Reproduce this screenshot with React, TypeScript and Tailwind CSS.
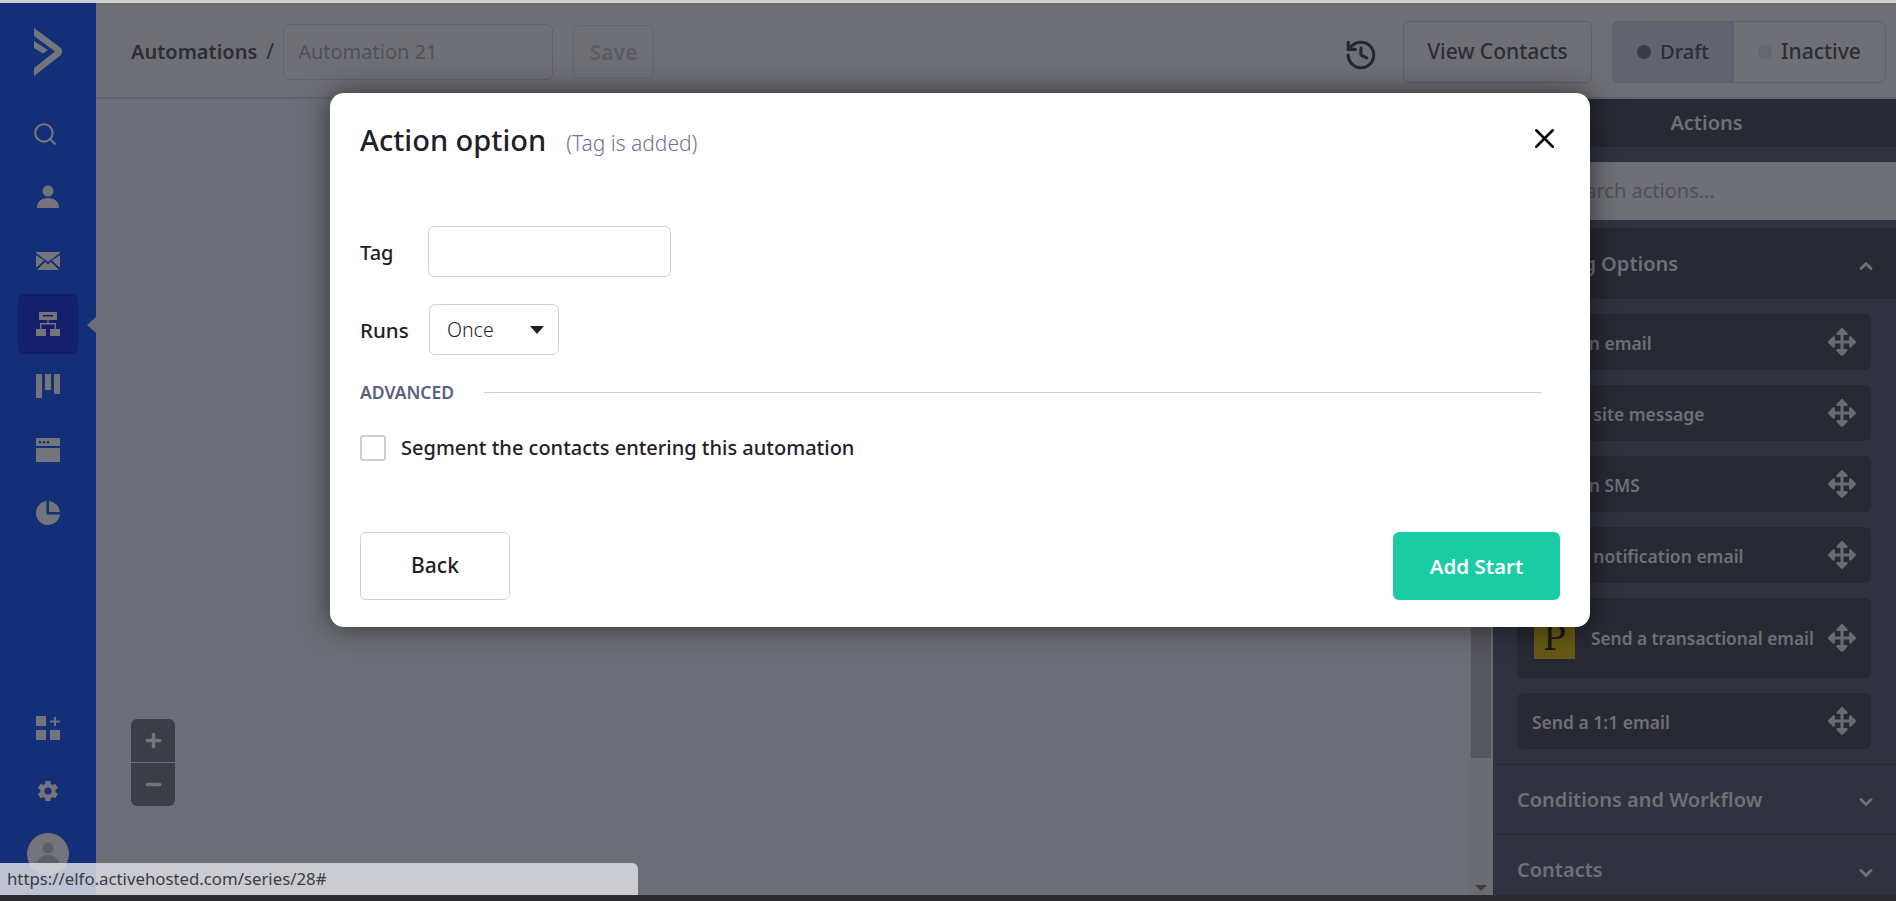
import { ChevronDown, ChevronUp, History, X, Plus, Minus, Search } from 'lucide-react';
import { FaArrowsAlt } from 'react-icons/fa';

const Logo = () => (
  <svg width="32" height="50" viewBox="0 0 32 50" fill="#74757b">
    <path d="M1 0 L28 20 Q30 23.500 28 27 L1 48 L1 40 L22 23.500 L1 8 Z" />
    <path d="M1 13 L15 22 L10 25.500 L1 20 Z" />
  </svg>
);

const UserIcon = ({ color = '#74757b' }: { color?: string }) => (
  <svg width="22" height="24" viewBox="0 0 22 24" fill={color}>
    <circle cx="11" cy="6" r="5.500" />
    <path d="M0 23 C0 16 5 13 11 13 C17 13 22 16 22 23 Z" />
  </svg>
);

const MailIcon = () => (
  <svg width="24" height="18" viewBox="0 0 24 18" fill="#74757b">
    <path d="M0 1 L12 10 L24 1 L24 0 L0 0 Z" />
    <path d="M0 3 L0 16 L8 8.500 Z" />
    <path d="M24 3 L24 16 L16 8.500 Z" />
    <path d="M1 18 L9 10 L12 12.500 L15 10 L23 18 Z" />
  </svg>
);

const AutomationIcon = () => (
  <svg width="24" height="24" viewBox="0 0 24 24" fill="#74757b">
    <path fillRule="evenodd" d="M3 0 H21 V8 H3 Z M7 3 V4.500 H17 V3 Z" />
    <path d="M11.300 8 H12.700 V11 H20 V17 H18.600 V12.400 H5.400 V17 H4 V11 H11.300 Z" />
    <rect x="0" y="17" width="10" height="7" />
    <rect x="14" y="17" width="10" height="7" />
  </svg>
);

const BoardIcon = () => (
  <svg width="24" height="24" viewBox="0 0 24 24" fill="#74757b">
    <rect x="0" y="0" width="6" height="24" />
    <rect x="9" y="0" width="6" height="16" />
    <rect x="18" y="0" width="6" height="20" />
  </svg>
);

const BrowserIcon = () => (
  <svg width="24" height="24" viewBox="0 0 24 24" fill="#74757b">
    <path fillRule="evenodd" d="M0 0 H24 V8 H0 Z M4 3 A1.300 1.300 0 1 0 4 5.600 A1.300 1.300 0 1 0 4 3 Z M8 3 A1.300 1.300 0 1 0 8 5.600 A1.300 1.300 0 1 0 8 3 Z M12 3 A1.300 1.300 0 1 0 12 5.600 A1.300 1.300 0 1 0 12 3 Z" />
    <rect x="0" y="10" width="24" height="14" />
  </svg>
);

const PieIcon = () => (
  <svg width="24" height="24" viewBox="0 0 24 24" fill="#74757b">
    <path d="M10.500 0.100 V13.500 H23.900 A12 12 0 1 1 10.500 0.100 Z" />
    <path d="M13 0.100 A12 12 0 0 1 23.900 11 H13 Z" />
  </svg>
);

const AppsIcon = () => (
  <svg width="24" height="24" viewBox="0 0 24 24" fill="#74757b">
    <rect x="0" y="0" width="10" height="10" />
    <rect x="0" y="14" width="10" height="10" />
    <rect x="14" y="14" width="10" height="10" />
    <path d="M18 1 H20 V4.500 H24 V6.500 H20 V10 H18 V6.500 H14 V4.500 H18 Z" />
  </svg>
);

const GearIcon = () => (
  <svg width="24" height="24" viewBox="0 0 24 24" fill="#74757b">
    <path d="M19.400 13c.1-.3.100-.7.100-1s0-.7-.1-1l2.100-1.600c.2-.2.200-.4.100-.6l-2-3.500c-.1-.2-.4-.3-.6-.2l-2.500 1c-.5-.4-1.100-.7-1.700-1l-.4-2.600c0-.3-.2-.4-.5-.4h-4c-.3 0-.5.100-.5.400l-.4 2.600c-.6.300-1.200.6-1.700 1l-2.500-1c-.2-.1-.5 0-.6.200l-2 3.500c-.1.200-.1.400.1.600L4.400 11c-.1.300-.1.700-.1 1s0 .7.100 1l-2.100 1.600c-.2.200-.2.400-.1.600l2 3.500c.1.200.4.300.6.200l2.500-1c.5.400 1.100.7 1.700 1l.4 2.600c0 .3.200.4.500.4h4c.3 0 .5-.1.500-.4l.4-2.600c.6-.3 1.200-.6 1.700-1l2.500 1c.2.100.5 0 .6-.2l2-3.500c.1-.2.100-.4-.1-.6L19.400 13zM12 15.500a3.500 3.500 0 1 1 0-7 3.500 3.500 0 0 1 0 7z" />
  </svg>
);

const actionItems = [
  { label: 'Send an email' },
  { label: 'Send a site message' },
  { label: 'Send an SMS' },
  { label: 'Send a notification email' },
];

const ActionRow = ({ label }: { label: string }) => (
  <div className="flex h-[56px] items-center justify-between rounded-md bg-[#272933] pl-[15px] pr-[15px]">
    <span className="pt-[2px] text-[17.500px] font-semibold text-[#6f7076]">{label}</span>
    <FaArrowsAlt size={28} color="#6a6b72" />
  </div>
);

const App = () => {
  return (
    <div className="relative flex h-[901px] w-[1896px] flex-col overflow-hidden bg-[#6c6f77] font-['Noto_Sans',sans-serif]">
      <div className="h-[3px] bg-[#cfcfcf]" />

      <div className="flex min-h-0 flex-1">
        {/* Sidebar */}
        <aside className="flex w-[96px] flex-col items-center bg-[#132f78] pt-[25px]">
          <div className="ml-[2px] flex h-[50px] items-center">
            <Logo />
          </div>
          <div className="mt-[41px] flex h-[30px] w-full items-center justify-center pr-[6px]">
            <Search size={26} strokeWidth={2} color="#74757b" />
          </div>
          <div className="mt-[33px] flex h-[30px] items-center">
            <UserIcon />
          </div>
          <div className="mt-[34px] flex h-[30px] items-center">
            <MailIcon />
          </div>
          <div className="relative mt-[18px] flex h-[60px] w-[60px] items-center justify-center rounded-md bg-[#141f6b]">
            <AutomationIcon />
            <div className="absolute left-[69px] top-[23px] h-0 w-0 border-y-[8px] border-r-[9px] border-y-transparent border-r-[#6c6f77]" />
          </div>
          <div className="mt-[20px]">
            <BoardIcon />
          </div>
          <div className="mt-[40px]">
            <BrowserIcon />
          </div>
          <div className="mt-[39px]">
            <PieIcon />
          </div>
          <div className="mt-auto mb-[92px] flex flex-col items-center gap-[39px]">
            <AppsIcon />
            <GearIcon />
          </div>
        </aside>

        {/* Main */}
        <div className="flex min-w-0 flex-1 flex-col">
          <header className="flex h-[96px] items-center border-b-2 border-[#61646f] bg-[#6f7076] pl-[35px] pr-[10px] pt-[4px]">
            <span className="text-[20px] font-semibold text-[#2c2d35]">Automations</span>
            <span className="ml-[9px] text-[21px] text-[#2c2d35]">/</span>
            <div className="ml-[9px] flex h-[56px] w-[270px] items-center rounded-md border border-[#62636b] px-[14px] text-[20px] text-[#4f5158]">
              Automation 21
            </div>
            <div className="ml-[20px] flex h-[54px] w-[81px] items-center justify-center rounded-md border border-[#66676e] text-[20.500px] font-bold text-[#5c5d63]">
              Save
            </div>
            <History size={34} strokeWidth={2.2} color="#25262e" className="ml-auto mt-[6px]" />
            <div className="ml-[25px] flex h-[62px] w-[189px] items-center justify-center rounded-md border border-[#5f6068] text-[21px] font-medium text-[#2c2d35]">
              View Contacts
            </div>
            <div className="ml-[20px] flex h-[62px] w-[274px] overflow-hidden rounded-md border border-[#5f6068]">
              <div className="flex w-[121px] items-center justify-center gap-[9px] border-r border-[#5f6068] bg-[#61636e] text-[20px] font-medium text-[#2c2d35]">
                <span className="h-[14px] w-[14px] rounded-full bg-[#383a48]" />
                Draft
              </div>
              <div className="flex flex-1 items-center justify-center gap-[9px] text-[21px] font-medium text-[#2c2d35]">
                <span className="h-[14px] w-[14px] rounded-full bg-[#65676f]" />
                Inactive
              </div>
            </div>
          </header>

          <div className="flex min-h-0 flex-1">
            {/* Canvas */}
            <div className="relative flex-1">
              <div className="absolute left-[35px] top-[620px] flex h-[87px] w-[44px] flex-col overflow-hidden rounded-md bg-[#3c3e47]">
                <div className="flex flex-1 items-center justify-center border-b border-[#6c6f77]">
                  <Plus size={21} strokeWidth={4} color="#74757b" />
                </div>
                <div className="flex flex-1 items-center justify-center">
                  <Minus size={21} strokeWidth={4} color="#74757b" />
                </div>
              </div>
            </div>

            {/* Scrollbar */}
            <div className="flex w-[24px] flex-col bg-[#6b6c71]">
              <div className="mx-[2px] h-[659px] bg-[#55565c]" />
              <div className="mb-[4px] mt-auto flex justify-center">
                <div className="h-0 w-0 border-x-[6px] border-t-[6px] border-x-transparent border-t-[#3c3d42]" />
              </div>
            </div>

            {/* Actions panel */}
            <div className="w-[403px] overflow-hidden bg-[#30333f]">
              <div className="flex h-[48px] items-center justify-center bg-[#272933] pl-[24px] text-[20px] font-semibold text-[#6f7076]">
                Actions
              </div>
              <div className="mt-[15px] flex h-[58px] items-center bg-[#6f7076] pl-[70px] text-[20px] text-[#4f5158]">
                Search actions...
              </div>
              <div className="mt-[8px] flex h-[71px] items-center justify-between bg-[#272933] pl-[24px] pr-[20px] text-[20px] font-semibold text-[#6f7076]">
                Sending Options
                <ChevronUp size={20} strokeWidth={3.5} color="#6f7076" className="mt-[5px]" />
              </div>
              <div className="flex flex-col gap-[15px] border-b border-[#272933] pb-[15px] pl-[24px] pr-[25px] pt-[15px]">
                {actionItems.map((item) => (
                  <ActionRow key={item.label} label={item.label} />
                ))}
                <div className="flex h-[80px] items-center justify-between rounded-md bg-[#272933] pl-[17px] pr-[15px]">
                  <div className="flex items-center gap-[16px]">
                    <div className="flex h-[41px] w-[41px] items-center justify-center bg-[#665a14] font-['DejaVu_Serif',serif] text-[34px] leading-none text-[#17171a]">
                      P
                    </div>
                    <span className="pt-[2px] text-[17.300px] font-semibold text-[#6f7076]">Send a transactional email</span>
                  </div>
                  <FaArrowsAlt size={28} color="#6a6b72" />
                </div>
                <ActionRow label="Send a 1:1 email" />
              </div>
              <div className="flex h-[70px] items-center justify-between border-b border-[#272933] pl-[24px] pr-[20px] text-[20px] font-semibold text-[#6f7076]">
                Conditions and Workflow
                <ChevronDown size={20} strokeWidth={3.5} color="#6f7076" className="mt-[5px]" />
              </div>
              <div className="flex h-[70px] items-center justify-between pl-[24px] pr-[20px] text-[20px] font-semibold text-[#6f7076]">
                Contacts
                <ChevronDown size={20} strokeWidth={3.5} color="#6f7076" className="mt-[5px]" />
              </div>
            </div>
          </div>
        </div>
      </div>

      <div className="h-[6px] bg-[#2c2c2e]" />

      {/* Avatar sits under the status bubble */}
      <div className="absolute left-[27px] top-[833px] flex h-[42px] w-[42px] items-start justify-center overflow-hidden rounded-full bg-[#74757b] pt-[9px]">
        <UserIcon color="#5d5f68" />
      </div>

      {/* Browser link status */}
      <div className="absolute bottom-[6px] left-0 flex h-[32px] w-[638px] items-center rounded-tr-md bg-[#dcdde2]/85 pl-[7px] text-[16.800px] text-[#3a3c44]">
        https://elfo.activehosted.com/series/28#
      </div>

      {/* Modal */}
      <div className="absolute left-[330px] top-[93px] flex h-[534px] w-[1260px] flex-col rounded-[14px] bg-white pl-[30px] pr-[30px] text-[#1f2029] shadow-[0_0_30px_rgba(0,0,0,0.55)]">
        <div className="flex h-[90px] items-center justify-between pt-[3px]">
          <div className="flex items-baseline gap-[20px]">
            <span className="text-[29px] font-medium">Action option</span>
            <span className="text-[21px] font-light text-[#6b7394]">(Tag is added)</span>
          </div>
          <X size={33} strokeWidth={1.8} color="#000" className="-mr-[1px] -mt-[2px]" />
        </div>
        <div className="mt-[43px] flex items-center">
          <label className="w-[68px] pt-[2px] text-[20px] font-medium">Tag</label>
          <div className="h-[51px] w-[243px] rounded-md border border-[#cdd1e3]" />
        </div>
        <div className="mt-[27px] flex items-center">
          <label className="w-[69px] pt-[1px] text-[20.500px] font-medium">Runs</label>
          <div className="flex h-[51px] w-[130px] items-center justify-between rounded-md border border-[#cdd1e3] pl-[17px] pr-[14px] text-[19.500px] font-light">
            Once
            <div className="h-0 w-0 border-x-[7px] border-t-[8px] border-x-transparent border-t-[#1f2029]" />
          </div>
        </div>
        <div className="mt-[24px] flex items-center gap-[30px] pr-[19px]">
          <span className="text-[17.500px] font-semibold text-[#5a6080]">ADVANCED</span>
          <div className="h-px flex-1 bg-[#cdd1e3]" />
        </div>
        <div className="mt-[28px] flex items-center gap-[15px]">
          <div className="h-[26px] w-[26px] rounded-[3px] border-2 border-[#cfcfcf]" />
          <span className="text-[20px] font-medium">Segment the contacts entering this automation</span>
        </div>
        <div className="mt-auto mb-[27px] flex justify-between">
          <button className="h-[68px] w-[150px] rounded-md border border-[#cdd1e3] text-[21px] font-medium">Back</button>
          <button className="h-[68px] w-[167px] rounded-md bg-[#19cca3] text-[20.500px] font-semibold text-white">Add Start</button>
        </div>
      </div>
    </div>
  );
};

export default App;
